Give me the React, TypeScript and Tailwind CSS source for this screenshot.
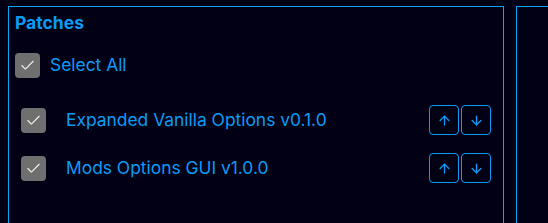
import { ArrowUp, ArrowDown, Check } from "lucide-react";

interface Patch {
  name: string;
}

const patches: Patch[] = [
  { name: "Expanded Vanilla Options v0.1.0" },
  { name: "Mods Options GUI v1.0.0" },
];

const CheckBox = () => (
  <div className="w-[25px] h-[25px] rounded-[4px] bg-[#6f6f70] flex items-center justify-center shrink-0">
    <Check size={17} strokeWidth={1.5} className="text-[#f2f2f2]" />
  </div>
);

const MoveButton = ({ up }: { up: boolean }) => (
  <button className="w-[30px] h-[30px] rounded-[4px] border border-[#0a9cf5] flex items-center justify-center text-[#0a9cf5]">
    {up ? <ArrowUp size={15} strokeWidth={2.2} /> : <ArrowDown size={15} strokeWidth={2.2} />}
  </button>
);

const PatchRow = ({ patch }: { patch: Patch }) => (
  <div className="flex items-center h-[30px] pl-[6px] pr-[12px]">
    <CheckBox />
    <span className="ml-[20px] text-[17.4px] text-[#0a9cf5] flex-1">{patch.name}</span>
    <div className="flex gap-[2px]">
      <MoveButton up />
      <MoveButton up={false} />
    </div>
  </div>
);

export default function App() {
  return (
    <div
      className="w-[548px] h-[223px] overflow-hidden bg-[#020014] flex gap-[12px] pt-[6px] pl-[8px]"
      style={{ fontFamily: "Inter, 'Noto Sans', sans-serif" }}
    >
      <div className="w-[496px] h-[260px] shrink-0 border border-[#0aa4f8] pl-[6px] pt-[4px]">
        <h2 className="text-[17.5px] font-bold text-[#0a9cf5] leading-[24px]">Patches</h2>
        <div className="flex items-center mt-[17px]">
          <CheckBox />
          <span className="ml-[10px] text-[17.4px] text-[#0a9cf5]">Select All</span>
        </div>
        <div className="flex flex-col gap-[18px] mt-[27px]">
          {patches.map((p) => (
            <PatchRow key={p.name} patch={p} />
          ))}
        </div>
      </div>
      <div className="w-[300px] h-[260px] shrink-0 border border-[#0aa4f8]" />
    </div>
  );
}
